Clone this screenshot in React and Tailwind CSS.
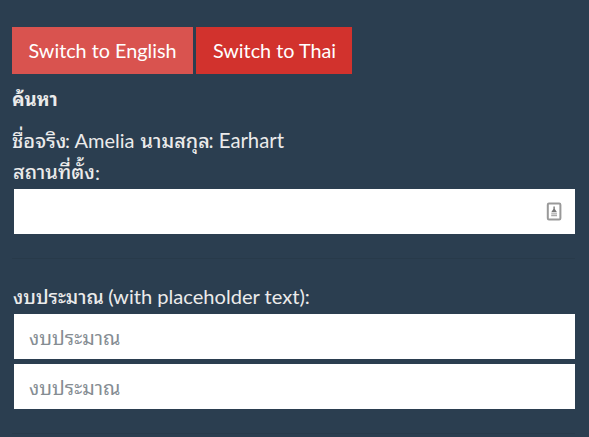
import React from "react";

const thai = "font-['Noto_Sans_Thai_Looped','Loma','Waree','Garuda','Leelawadee_UI','Noto_Sans',sans-serif]";

function Thai({ children, className = "" }) {
  return <span className={`${thai} inline-block whitespace-nowrap ${className}`}>{children}</span>;
}

function ContactIcon() {
  return (
    <svg width="16" height="20" viewBox="0 0 16 20" fill="none" aria-hidden="true">
      <rect x="1.8" y="1.5" width="12.6" height="16" rx="1.2" stroke="#999" strokeWidth="2" />
      <path d="M7.4 4.5H8.8V7L11 10.3H5.2L7.4 7Z" fill="#777" />
      <path d="M5.2 11.9H11M5.2 13.7H11" stroke="#aaa" strokeWidth="1.2" />
    </svg>
  );
}

function Field({ placeholder, icon }) {
  return (
    <div className="flex h-[45px] items-center bg-white pl-[15px] pr-[13px]">
      <input
        className={`${thai} h-[45px] min-w-0 flex-1 bg-transparent pb-px text-[19.8px] text-[#7b8a8b] outline-none placeholder:text-[#858d93]`}
        placeholder={placeholder}
      />
      {icon}
    </div>
  );
}

export default function App() {
  return (
    <main className="h-[437px] w-[589px] overflow-hidden bg-[#2b3e50] pl-3 pr-[14px] pt-[27px] font-[Lato,sans-serif] text-[20px] text-[#ebebeb]">
      <div className="flex gap-[3px] text-[19.8px] text-white">
        <button className="h-[47px] w-[181px] bg-[#d9534f] pt-px">Switch to English</button>
        <button className="h-[47px] w-[156px] bg-[#d2322d] pl-px pt-px">Switch to Thai</button>
      </div>
      <h4 className="mt-[9px] flex h-[30px] items-center text-[18.7px] font-bold leading-[30px]">
        <Thai>ค้นหา</Thai>
      </h4>
      <p className="mt-3 flex h-[31px] items-center whitespace-pre leading-[31px]">
        <Thai className="-mt-[2px] w-[53px] font-medium">ชื่อจริง</Thai>: Amelia <Thai className="-mt-[2px] ml-px w-[68px] text-[19.8px] font-medium">นามสกุล</Thai>
        <span className="text-[20.3px]">: Earhart</span>
      </p>
      <label className="mt-px flex h-[31px] items-center pl-px leading-[31px]">
        <Thai className="-mt-[4px] w-[82px] font-medium">สถานที่ตั้ง</Thai>
        <span className="-mt-px">:</span>
      </label>
      <div className="ml-[2px] mt-px">
        <Field icon={<ContactIcon />} />
      </div>
      <hr className="mt-6 border-[#283a4a]" />
      <label className="mt-5 flex h-[34px] items-center whitespace-pre pl-px leading-[34px]">
        <Thai className="-mt-px w-[90px] text-[19.4px] font-medium">งบประมาณ</Thai>
        <span className="text-[20.1px]"> (with placeholder text):</span>
      </label>
      <div className="ml-[2px] mt-px flex flex-col gap-[5px]">
        <Field placeholder="งบประมาณ" />
        <Field placeholder="งบประมาณ" />
      </div>
      <hr className="mt-6 border-[#283a4a]" />
    </main>
  );
}
